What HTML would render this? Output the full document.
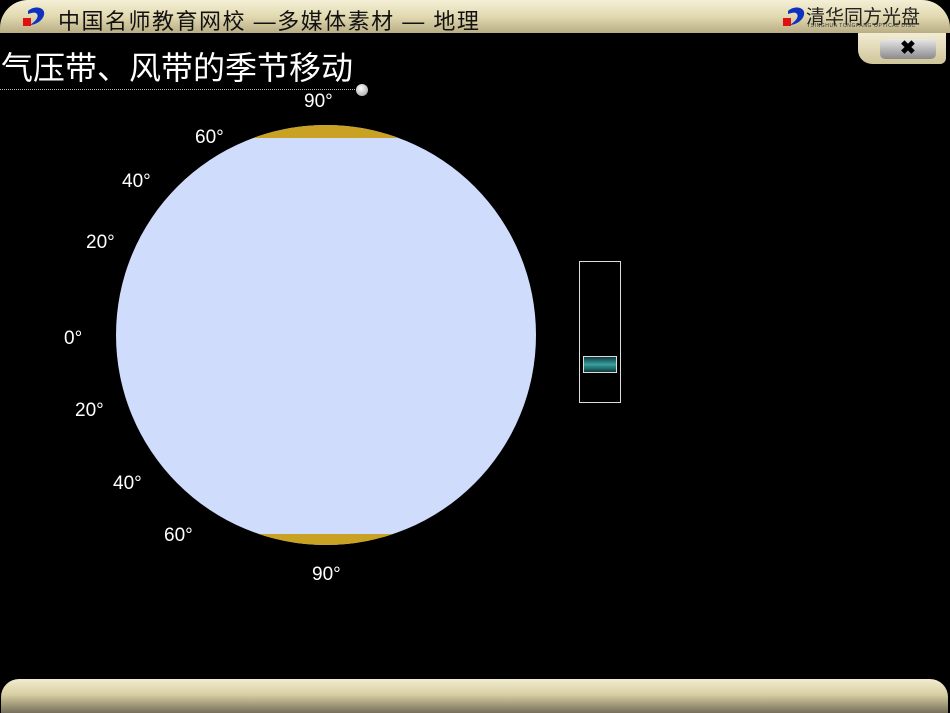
<!DOCTYPE html>
<html><head><meta charset="utf-8"><style>
body{margin:0;width:950px;height:713px;background:#000;overflow:hidden;position:relative;font-family:"Liberation Sans","Noto Sans CJK SC",sans-serif}
.hdr{position:absolute;left:0;top:0;width:950px;height:33px;background:linear-gradient(#f4efd6,#e2d9b0 50%,#b8ad85);border-radius:28px 28px 0 0}
.hdr .t{position:absolute;left:58px;top:4px;font-size:22px;color:#111;letter-spacing:1.5px;white-space:nowrap}
.ftr{position:absolute;left:1px;top:679px;width:947px;height:34px;background:linear-gradient(#f2ecd0,#d8cfa3 45%,#77705a);border-radius:18px 18px 0 0}
.close{position:absolute;left:858px;top:33px;width:88px;height:31px;background:linear-gradient(#f2ecd2,#cfc59a);border-radius:0 0 6px 14px}
.close div{position:absolute;left:22px;top:6px;width:56px;height:20px;border-radius:5px;background:linear-gradient(#e8e8e8,#8a8a8a);text-align:center;font-weight:bold;font-size:19px;line-height:20px;color:#000}
.title{position:absolute;left:1px;top:43px;font-size:32px;color:#fff;white-space:nowrap}
.dots{position:absolute;left:0;top:89px;width:355px;border-top:1px dotted #bbb}
.ball{position:absolute;left:356px;top:84px;width:12px;height:12px;border-radius:50%;background:radial-gradient(circle at 40% 35%,#fff,#999)}
.lab{position:absolute;color:#fff;font-size:19px}
.sl{position:absolute;left:579px;top:261px;width:40px;height:140px;border:1px solid #ddd}
.kn{position:absolute;left:3px;top:94px;width:32px;height:15px;border:1px solid #ddd;background:linear-gradient(#0c3a3c,#3aa0a0 50%,#0c3a3c)}
</style></head><body>
<div class="hdr">
<svg style="position:absolute;left:22px;top:5px" width="26" height="24"><path d="M6 6 C12 0 24 2 22 10 C20 17 12 20 8 20 C14 16 18 11 14 8 C12 7 9 8 6 9Z" fill="#1030c0"/><rect x="1" y="13" width="8" height="8" fill="#e01010"/></svg>
<div class="t">中国名师教育网校 —多媒体素材 — 地理</div>
<svg style="position:absolute;left:782px;top:5px" width="26" height="24"><path d="M6 6 C12 0 24 2 22 10 C20 17 12 20 8 20 C14 16 18 11 14 8 C12 7 9 8 6 9Z" fill="#1030c0"/><rect x="1" y="13" width="8" height="8" fill="#e01010"/></svg>
<div style="position:absolute;left:806px;top:2px;font-size:19px;color:#222">清华同方光盘</div>
<div style="position:absolute;left:807px;top:23px;font-size:5px;color:#333;letter-spacing:0.6px;white-space:nowrap">TSINGHUA TONGFANG OPTICAL DISC</div>
</div>
<div class="close"><div>✖</div></div>
<div class="title">气压带、风带的季节移动</div>
<div class="dots"></div><div class="ball"></div>
<svg style="position:absolute;left:0;top:0" width="950" height="713">
<defs><clipPath id="c"><circle cx="326" cy="335" r="210"/></clipPath></defs>
<circle cx="326" cy="335" r="210" fill="#d0dcfc"/>
<g clip-path="url(#c)"><rect x="100" y="120" width="460" height="18" fill="#c9a123"/><rect x="100" y="534" width="460" height="20" fill="#c9a123"/></g>
</svg>
<div class="lab" style="left:304px;top:91px">90°</div>
<div class="lab" style="left:195px;top:127px">60°</div>
<div class="lab" style="left:122px;top:171px">40°</div>
<div class="lab" style="left:86px;top:232px">20°</div>
<div class="lab" style="left:64px;top:328px">0°</div>
<div class="lab" style="left:75px;top:400px">20°</div>
<div class="lab" style="left:113px;top:473px">40°</div>
<div class="lab" style="left:164px;top:525px">60°</div>
<div class="lab" style="left:312px;top:564px">90°</div>
<div class="sl"><div class="kn"></div></div>
<div class="ftr"></div>
</body></html>
